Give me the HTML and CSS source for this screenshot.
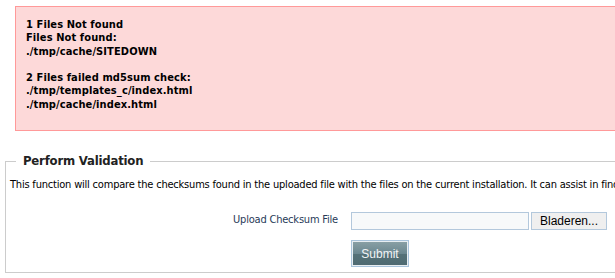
FILE: index.html
```html
<!DOCTYPE html>
<html>
<head>
<meta charset="utf-8">
<link rel="stylesheet" href="styles.css">
</head>
<body>
<div class="error-box">
  <div class="error-text">
    1 Files Not found<br>
    Files Not found:<br>
    ./tmp/cache/SITEDOWN<br>
    <br>
    2 Files failed md5sum check:<br>
    ./tmp/templates_c/index.html<br>
    ./tmp/cache/index.html
  </div>
</div>
<fieldset class="validation">
  <legend>Perform Validation</legend>
  <p class="intro">This function will compare the checksums found in the uploaded file with the files on the current installation. It can assist in finding files that have been modified or are missing.</p>
  <div class="upload-row">
    <label class="upload-label">Upload Checksum File</label>
    <div class="file-field">
      <span class="file-input"></span>
      <span class="browse-btn">Bladeren...</span>
    </div>
  </div>
  <div class="submit-row">
    <span class="submit-btn">Submit</span>
  </div>
</fieldset>
</body>
</html>
```
FILE: styles.css
```css
html, body {
  margin: 0;
  padding: 0;
  background: #fff;
  overflow: hidden;
  width: 615px;
  height: 278px;
}
body {
  font-family: "DejaVu Sans Condensed", "DejaVu Sans", sans-serif;
  font-size: 11px;
  color: #000;
}
.error-box {
  margin: 6px 0 0 15px;
  width: 640px;
  height: 123px;
  border: 1px solid #ff9999;
  background: #fdd9d9;
  box-sizing: content-box;
}
.error-text {
  padding: 11px 0 0 10px;
  font-weight: bold;
  line-height: 13.3px;
  white-space: nowrap;
  letter-spacing: 0.1px;
}
.validation {
  margin: 23px 0 0 5px;
  width: 640px;
  border: 1px solid #cccccc;
  padding: 0 0 5px 0;
  box-sizing: content-box;
  white-space: nowrap;
}
.validation legend {
  font-weight: bold;
  font-size: 13px;
  color: #222;
  margin-left: 10px;
  padding: 0 7px;
  line-height: 14px;
  letter-spacing: -0.2px;
}
.intro {
  margin: 10px 0 0 4px;
  line-height: 14px;
  color: #000;
  letter-spacing: -0.2px;
}
.upload-row {
  display: flex;
  align-items: center;
  margin-top: 20px;
  height: 18px;
}
.upload-label {
  width: 332px;
  text-align: right;
  color: #283a58;
  padding-bottom: 3px;
  letter-spacing: -0.2px;
}
.file-field {
  display: flex;
  margin-left: 13px;
  gap: 2px;
}
.file-input {
  display: block;
  width: 176px;
  height: 16px;
  border: 1px solid #b3c8dc;
  background: #f7f9fa;
}
.browse-btn {
  display: flex;
  align-items: center;
  justify-content: center;
  width: 74px;
  height: 16px;
  border: 1px solid #b3c8dc;
  background: #efefef;
  font-family: "Liberation Sans", Arial, sans-serif;
  font-size: 12px;
  color: #000;
}
.submit-row {
  margin: 10px 0 0 345px;
  height: 27px;
}
.submit-btn {
  display: flex;
  align-items: center;
  justify-content: center;
  width: 56px;
  height: 25px;
  border: 1px solid #a9c4dc;
  outline: 1px solid #e8eef2;
  outline-offset: -2px;
  background: linear-gradient(#8aa1a6 0%, #6b8790 50%, #557178 52%, #4f6a72 100%);
  color: #f2f4f6;
  font-family: "Liberation Sans", Arial, sans-serif;
  font-size: 12px;
}
```
